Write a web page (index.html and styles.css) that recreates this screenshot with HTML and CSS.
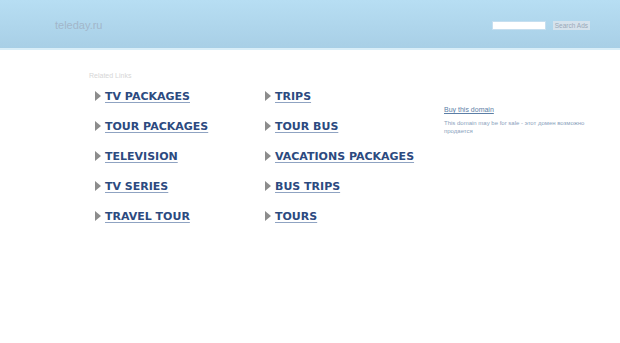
FILE: index.html
```html
<!DOCTYPE html>
<html lang="en">
<head>
  <meta charset="UTF-8" />
  <title>teleday.ru</title>
  <link rel="stylesheet" href="styles.css">
</head>
<body>

<header class="header">
  <div class="header__logo">teleday.ru</div>
  <form class="header__search">
    <input class="header__input" type="text">
    <button class="header__button" type="button">Search Ads</button>
  </form>
</header>

<main class="content">
  <section class="links">
    <div class="links__title">Related Links</div>
    <div class="links__grid">
      <a class="links__item" href="#">TV PACKAGES</a>
      <a class="links__item" href="#">TRIPS</a>
      <a class="links__item" href="#">TOUR PACKAGES</a>
      <a class="links__item" href="#">TOUR BUS</a>
      <a class="links__item" href="#">TELEVISION</a>
      <a class="links__item" href="#">VACATIONS PACKAGES</a>
      <a class="links__item" href="#">TV SERIES</a>
      <a class="links__item" href="#">BUS TRIPS</a>
      <a class="links__item" href="#">TRAVEL TOUR</a>
      <a class="links__item" href="#">TOURS</a>
    </div>
  </section>
  <aside class="sale">
    <a class="sale__link" href="#">Buy this domain</a>
    <p class="sale__text">This domain may be for sale - этот домен возможно продается</p>
  </aside>
</main>

</body>
</html>
```
FILE: styles.css
```css
* {
  box-sizing: border-box;
}
body {
  margin: 0;
  background: #fff;
  font-family: 'DejaVu Sans', Verdana, sans-serif;
}

.header {
  height: 50px;
  background: linear-gradient(#b7def3, #a8cfe6);
  border-bottom: 2px solid #d9eef8;
  display: flex;
  align-items: center;
  justify-content: space-between;
  padding: 2px 30px 0 55px;
}
.header__logo {
  font-family: 'Liberation Sans', Arial, sans-serif;
  font-size: 11px;
  color: #a2b6ca;
}
.header__search {
  display: flex;
  align-items: center;
  gap: 7px;
  margin: 0;
}
.header__input {
  width: 54px;
  height: 9px;
  border: 1px solid #c6dff0;
  background: #fff;
  padding: 0;
}
.header__button {
  height: 9px;
  padding: 0 2px;
  border: none;
  background: #d5e2ec;
  color: #9aa9b8;
  font-family: 'Liberation Sans', Arial, sans-serif;
  font-size: 6.5px;
  line-height: 9px;
}

.content {
  display: flex;
  padding: 22px 0 0 89px;
}
.links {
  width: 355px;
}
.links__title {
  font-family: 'Liberation Sans', Arial, sans-serif;
  font-size: 7px;
  color: #d6d6d6;
  height: 17px;
}
.links__grid {
  display: grid;
  grid-template-columns: 170px 1fr;
  grid-auto-rows: 30px;
  padding-left: 6px;
}
.links__item {
  display: flex;
  align-items: center;
  gap: 4px;
  height: 14px;
  font-size: 11px;
  font-weight: bold;
  color: #2c4a7f;
  text-decoration: underline;
  text-decoration-color: #8fa3c2;
  text-underline-offset: 2px;
}
.links__item::before {
  content: "";
  width: 0;
  height: 0;
  border-top: 5px solid transparent;
  border-bottom: 5px solid transparent;
  border-left: 6px solid #8c8c8c;
}

.sale {
  padding-top: 25px;
  width: 165px;
}
.sale__link {
  font-family: 'Liberation Sans', Arial, sans-serif;
  font-size: 7px;
  color: #5b7ea6;
  text-decoration: underline;
}
.sale__text {
  font-family: 'Liberation Sans', Arial, sans-serif;
  font-size: 6px;
  color: #8aa2bc;
  line-height: 8px;
  margin: 3px 0 0;
}
```
